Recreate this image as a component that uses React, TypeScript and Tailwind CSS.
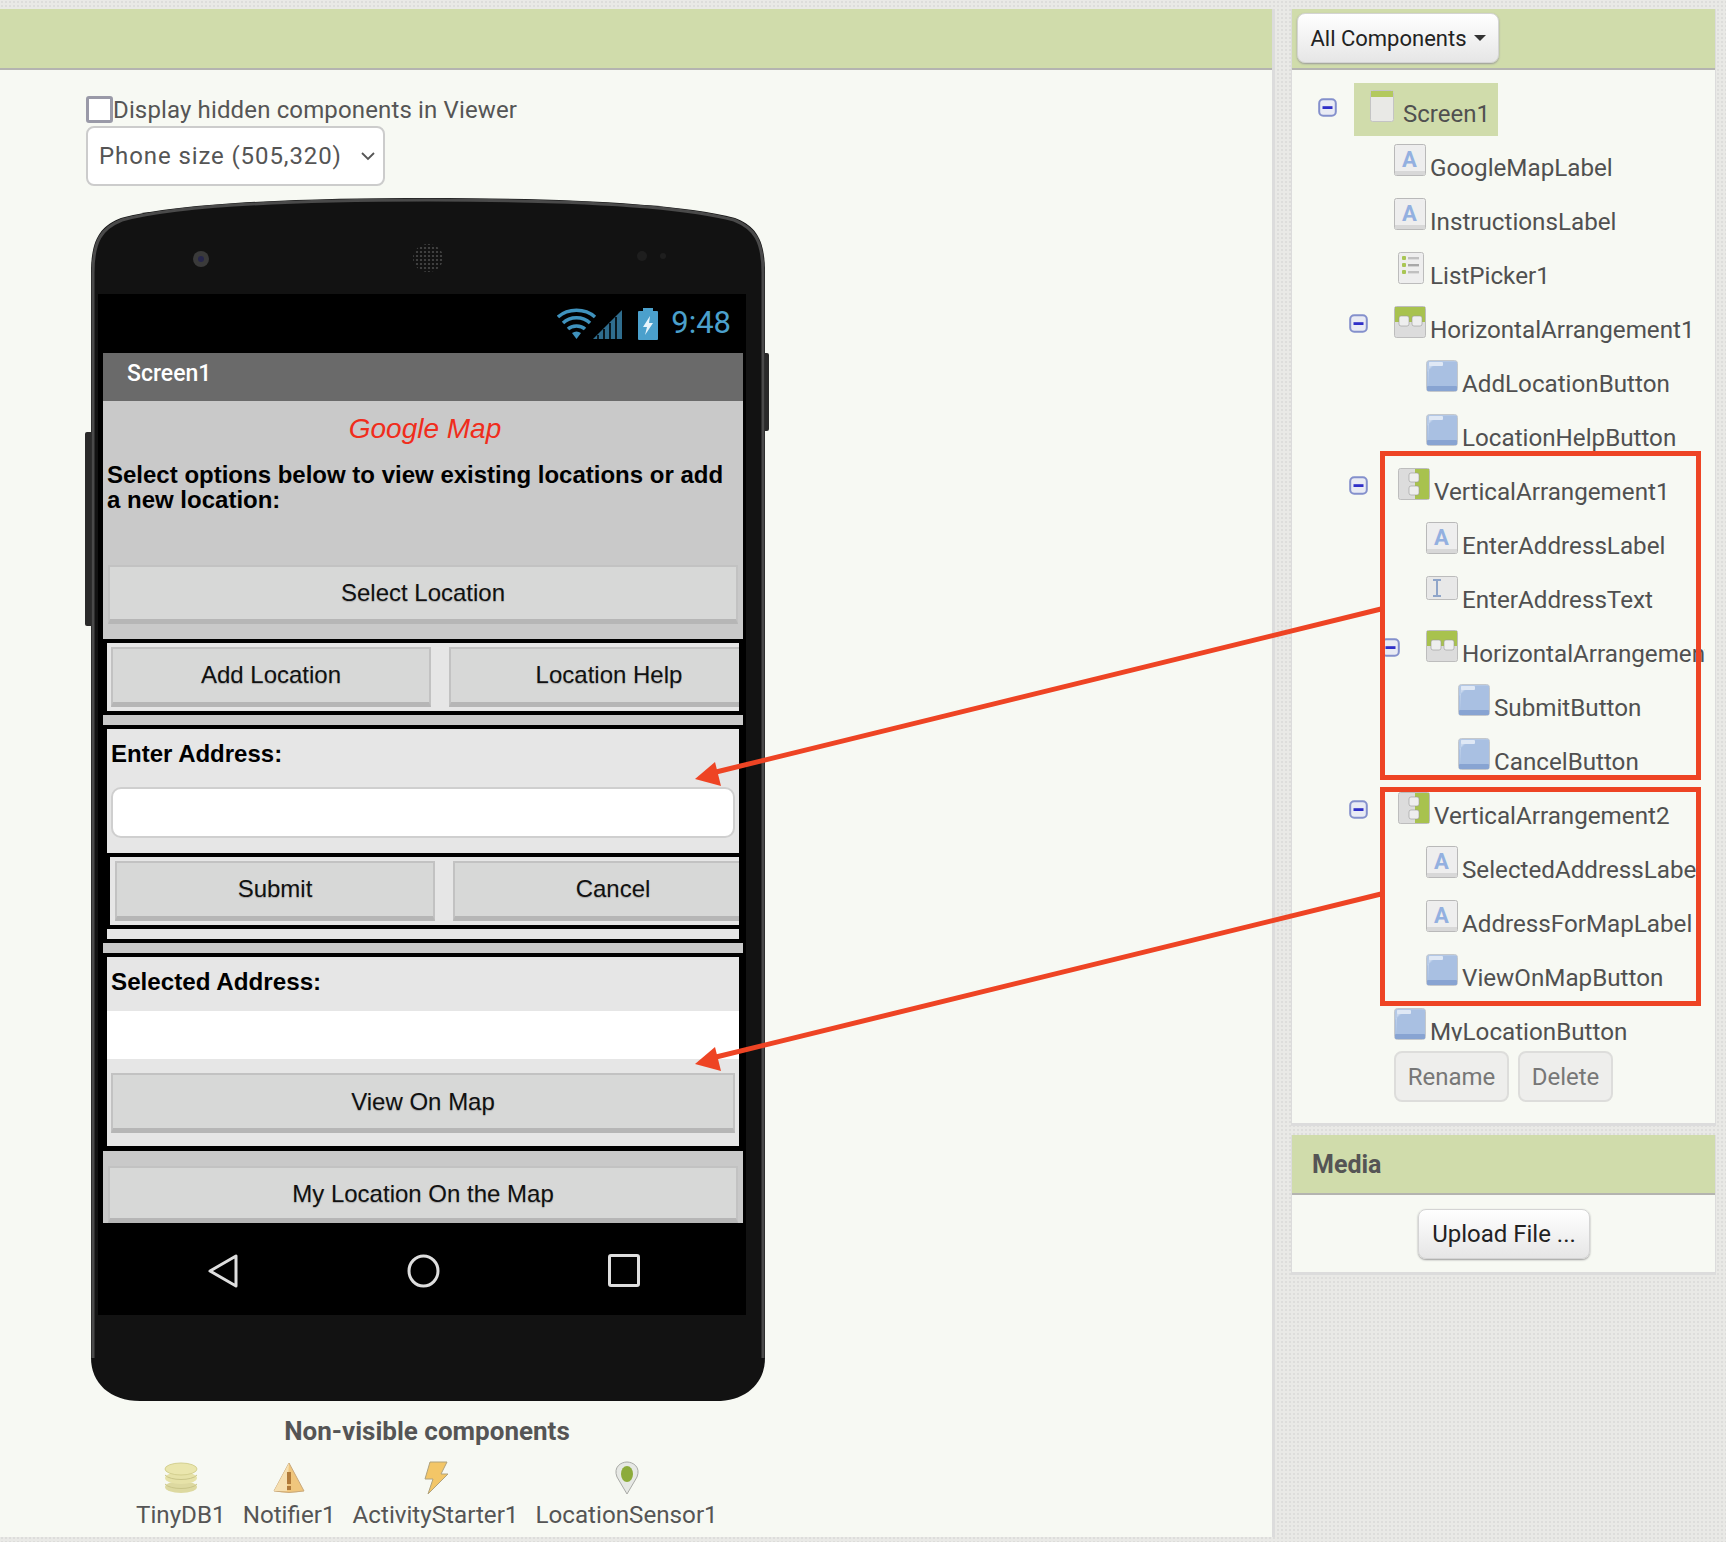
const ARIAL = "font-['Liberation_Sans',Arial,sans-serif]";

type Kind = "screen" | "label" | "list" | "hbox" | "vbox" | "text" | "button";

const tree: { name: string; kind: Kind; depth: number; toggle?: boolean }[] = [
  { name: "GoogleMapLabel", kind: "label", depth: 1 },
  { name: "InstructionsLabel", kind: "label", depth: 1 },
  { name: "ListPicker1", kind: "list", depth: 1 },
  { name: "HorizontalArrangement1", kind: "hbox", depth: 1, toggle: true },
  { name: "AddLocationButton", kind: "button", depth: 2 },
  { name: "LocationHelpButton", kind: "button", depth: 2 },
  { name: "VerticalArrangement1", kind: "vbox", depth: 1, toggle: true },
  { name: "EnterAddressLabel", kind: "label", depth: 2 },
  { name: "EnterAddressText", kind: "text", depth: 2 },
  { name: "HorizontalArrangement2", kind: "hbox", depth: 2, toggle: true },
  { name: "SubmitButton", kind: "button", depth: 3 },
  { name: "CancelButton", kind: "button", depth: 3 },
  { name: "VerticalArrangement2", kind: "vbox", depth: 1, toggle: true },
  { name: "SelectedAddressLabel", kind: "label", depth: 2 },
  { name: "AddressForMapLabel", kind: "label", depth: 2 },
  { name: "ViewOnMapButton", kind: "button", depth: 2 },
  { name: "MyLocationButton", kind: "button", depth: 1 },
];

function Minus() {
  return (
    <svg width="19" height="19" viewBox="0 0 19 19">
      <rect x="1.2" y="1.2" width="16.6" height="16.6" rx="4" fill="#e9ebf4" stroke="#8490cc" strokeWidth="2" />
      <rect x="4.5" y="8.2" width="10" height="2.8" fill="#3030c8" />
    </svg>
  );
}

function TreeIcon({ kind }: { kind: Kind }) {
  if (kind === "button") {
    return (
      <svg width="32" height="32" viewBox="0 0 32 32" className="shrink-0">
        <rect x="0.5" y="0.5" width="31" height="31" rx="3" fill="#b3c8e6" stroke="#c4c8cc" />
        <path d="M1 28 L1 12 L12 2 L31 2 L31 28 Z" fill="#a9c0e2" />
        <path d="M2 26 L2 10 L10 2 L3 2 Z" fill="#c9d8ee" />
        <rect x="3" y="2" width="14" height="4" rx="1" fill="#dfe8f5" />
        <rect x="1" y="26" width="30" height="5" rx="1" fill="#88a4d2" />
      </svg>
    );
  }
  if (kind === "label") {
    return (
      <svg width="32" height="32" viewBox="0 0 32 32" className="shrink-0">
        <rect x="0.5" y="0.5" width="31" height="31" rx="2" fill="#eeeeee" stroke="#b9b9b9" />
        <rect x="1" y="27" width="30" height="4" fill="#d8d8d8" />
        <text x="15.5" y="22.5" textAnchor="middle" fontFamily="Roboto" fontWeight="700" fontSize="22" fill="#93b0e0">
          A
        </text>
      </svg>
    );
  }
  if (kind === "text") {
    return (
      <svg width="32" height="24" viewBox="0 0 32 24" className="shrink-0">
        <rect x="0.5" y="0.5" width="31" height="23" rx="2" fill="#e8e8e8" stroke="#bcbcbc" />
        <path d="M7 4 H15 M7 20 H15 M11 4 V20" stroke="#8fa5c9" strokeWidth="2" fill="none" />
      </svg>
    );
  }
  if (kind === "list") {
    return (
      <svg width="26" height="32" viewBox="0 0 26 32" className="mr-[2px] ml-[4px] shrink-0">
        <rect x="0.5" y="0.5" width="25" height="31" rx="2" fill="#eeeeee" stroke="#bcbcbc" />
        <rect x="4" y="4" width="4" height="4" rx="1" fill="#a9c654" />
        <rect x="4" y="11" width="4" height="4" rx="1" fill="#a9c654" />
        <rect x="4" y="18" width="4" height="4" rx="1" fill="#a9c654" />
        <rect x="10" y="5" width="11" height="2.4" fill="#c0c0c0" />
        <rect x="10" y="12" width="11" height="2.4" fill="#a8a8a8" />
        <rect x="10" y="19" width="11" height="2.4" fill="#c0c0c0" />
      </svg>
    );
  }
  if (kind === "hbox") {
    return (
      <svg width="32" height="32" viewBox="0 0 32 32" className="shrink-0">
        <rect x="0.5" y="0.5" width="31" height="31" rx="2" fill="#dcdcdc" stroke="#bdbdbd" />
        <rect x="1" y="1" width="30" height="15" fill="#a8c24e" />
        <rect x="5" y="10" width="10" height="10" rx="2" fill="#eeeeee" stroke="#999" strokeWidth="0.6" />
        <rect x="18" y="10" width="10" height="10" rx="2" fill="#eeeeee" stroke="#999" strokeWidth="0.6" />
      </svg>
    );
  }
  if (kind === "vbox") {
    return (
      <svg width="32" height="32" viewBox="0 0 32 32" className="ml-[4px] shrink-0">
        <rect x="0.5" y="0.5" width="31" height="31" rx="2" fill="#dcdcdc" stroke="#bdbdbd" />
        <rect x="17" y="1" width="14" height="30" fill="#a8c24e" />
        <rect x="11" y="5" width="10" height="9" rx="2" fill="#eeeeee" stroke="#999" strokeWidth="0.6" />
        <rect x="11" y="18" width="10" height="9" rx="2" fill="#eeeeee" stroke="#999" strokeWidth="0.6" />
      </svg>
    );
  }
  return (
    <svg width="24" height="32" viewBox="0 0 24 32" className="shrink-0">
      <rect x="0.5" y="0.5" width="23" height="31" rx="2" fill="#e9e9e6" stroke="#c4c4c4" />
      <rect x="1" y="1" width="22" height="6" fill="#b3c95e" />
    </svg>
  );
}

function TreeRow({ name, kind, depth, toggle }: { name: string; kind: Kind; depth: number; toggle?: boolean }) {
  return (
    <div className="flex h-[54px] w-[413px] items-start overflow-hidden" style={{ paddingLeft: 25 + depth * 32 }}>
      <div className="mt-[12px] w-[45px] shrink-0">{toggle && <Minus />}</div>
      <div className="mt-[4px] shrink-0">
        <TreeIcon kind={kind} />
      </div>
      <span className="mt-[11px] ml-[4px] whitespace-nowrap text-[24.2px] leading-[34px] text-[#505050]">{name}</span>
    </div>
  );
}

function DroidButton({ label, className }: { label: string; className: string }) {
  return (
    <div
      className={`flex shrink-0 items-center justify-center border-2 border-b-[5px] border-[#c2c2c2] border-b-[#b6b6b6] bg-[#d7d8d7] text-[24px] text-[#111] [text-shadow:0_1px_1px_#aaa] ${className}`}
    >
      {label}
    </div>
  );
}

function StatusIcons() {
  return (
    <svg width="104" height="34" viewBox="0 0 104 34" className="mr-[10px]">
      <g fill="none" stroke="#3f92bd" strokeWidth="3.4">
        <path d="M1 10 C11 1 28 1 38 10" />
        <path d="M6 16 C13 9 26 9 33 16" />
        <path d="M11 22 C15 18 24 18 28 22" />
      </g>
      <path d="M15 26 C18 24 21 24 24 26 L19.5 32 Z" fill="#3f92bd" />
      <path d="M36 32 L65 3 L65 32 Z" fill="#3f92bd" opacity="0.75" />
      <path d="M41 32 L41 28 M47 32 L47 22 M53 32 L53 16 M59 32 L59 10" stroke="#000" strokeWidth="1.6" />
      <rect x="81" y="4" width="20" height="29" rx="1" fill="#4ba0cc" />
      <rect x="86" y="1" width="10" height="4" fill="#4ba0cc" />
      <path d="M93 9 L86 20 H90 L88 28 L96 16 H92 Z" fill="#e8f4fb" />
    </svg>
  );
}

function NonVisible({ label, children }: { label: string; children: React.ReactNode }) {
  return (
    <div className="flex flex-col items-center">
      <div className="flex h-[34px] items-center">{children}</div>
      <span className="mt-[3px] text-[24.2px] leading-[34px] text-[#555]">{label}</span>
    </div>
  );
}

function Phone() {
  return (
    <div className="relative mt-[12px] ml-[91px] h-[1203px] w-[674px]">
      <svg width="674" height="1203" viewBox="0 0 674 1203" className="absolute inset-0 overflow-visible">
        <defs>
          <pattern id="mesh" width="4" height="4" patternUnits="userSpaceOnUse">
            <circle cx="2" cy="2" r="1.1" fill="#4a4a4a" />
          </pattern>
        </defs>
        <rect x="-6" y="234" width="8" height="194" rx="2" fill="#2a2a2a" />
        <rect x="672" y="155" width="6" height="78" rx="2" fill="#2a2a2a" />
        <path
          d="M0 75 C0 40 10 28 30 20 C90 4 220 0 337 0 C454 0 584 4 644 20 C664 28 674 40 674 75 L674 1160 C674 1185 655 1203 625 1203 L49 1203 C19 1203 0 1185 0 1160 Z"
          fill="#121212"
        />
        <path
          d="M2 1160 L2 75 C2 42 11 30 31 22 C90 6 220 2 337 2 C454 2 584 6 643 22 C663 30 672 42 672 75 L672 1160"
          fill="none"
          stroke="#4a4a4a"
          strokeWidth="3"
        />
        <circle cx="110" cy="61" r="8" fill="#3a3a3a" />
        <circle cx="110" cy="61" r="3" fill="#26264a" />
        <ellipse cx="337" cy="60" rx="15" ry="14" fill="url(#mesh)" />
        <circle cx="551" cy="58" r="5" fill="#1e1e1e" />
        <circle cx="572" cy="58" r="3" fill="#1e1e1e" />
      </svg>
      <div className={`absolute top-[96px] left-[7px] flex h-[1021px] w-[648px] flex-col bg-black pr-[3px] pl-[5px] ${ARIAL}`}>
        <div className="flex h-[59px] items-center justify-end">
          <StatusIcons />
          <span className="mr-[12px] font-[Roboto] text-[31px] text-[#4ba0cc]">9:48</span>
        </div>
        <div className="flex h-[48px] items-center bg-[#6a6a6a] pb-[5px] pl-[24px] font-[Roboto] text-[23px] font-medium text-white">
          Screen1
        </div>
        <div className="flex h-[238px] flex-col bg-[#c9c9c9]">
          <div className="mt-[10px] pl-[4px] text-center text-[28px] leading-[36px] text-[#f02d1c] italic">Google Map</div>
          <div className="mt-[15px] pl-[4px] text-[24px] leading-[25px] font-bold text-black">
            Select options below to view existing locations or add a new location:
          </div>
          <DroidButton label="Select Location" className="mx-[5px] mt-[53px] h-[59px]" />
        </div>
        <div className="mx-[4px] mt-[4px] flex h-[68px] gap-[18px] overflow-hidden bg-[#e6e6e6] p-[4px]">
          <DroidButton label="Add Location" className="h-[60px] w-[320px] pb-[2px]" />
          <DroidButton label="Location Help" className="h-[60px] w-[320px] pb-[2px]" />
        </div>
        <div className="mt-[4px] h-[10px] bg-[#c9c9c9]" />
        <div className="mx-[4px] mt-[4px] h-[124px] bg-[#e6e6e6] pt-[8px] pl-[4px]">
          <div className="text-[24px] leading-[34px] font-bold text-black">Enter Address:</div>
          <div className="mt-[16px] h-[51px] w-[624px] rounded-[10px] border-2 border-[#cfcfcf] bg-white" />
        </div>
        <div className="mt-[4px] mr-[4px] ml-[7px] flex h-[68px] gap-[18px] overflow-hidden bg-[#e6e6e6] p-[4px] pl-[5px]">
          <DroidButton label="Submit" className="h-[60px] w-[320px] pb-[2px]" />
          <DroidButton label="Cancel" className="h-[60px] w-[320px] pb-[2px]" />
        </div>
        <div className="mx-[4px] mt-[4px] h-[10px] bg-[#e6e6e6]" />
        <div className="mt-[4px] h-[10px] bg-[#c9c9c9]" />
        <div className="mx-[4px] mt-[4px] flex h-[189px] flex-col bg-[#e6e6e6]">
          <div className="h-[54px] pt-[8px] pl-[4px] text-[24.2px] leading-[34px] font-bold text-black">
            Selected Address:
          </div>
          <div className="h-[48px] bg-white" />
          <DroidButton label="View On Map" className="mx-[4px] mt-[14px] h-[60px]" />
        </div>
        <div className="mt-[5px] flex h-[72px] flex-col bg-[#c9c9c9]">
          <DroidButton label="My Location On the Map" className="mx-[5px] mt-[15px] h-[57px] border-b-[3px] pt-[2px]" />
        </div>
        <div className="flex flex-1 items-center justify-between pt-[3px] pr-[103px] pl-[104px]">
          <svg width="32" height="36" viewBox="0 0 32 36">
            <path d="M29 3 L29 33 L3 18 Z" fill="none" stroke="#dedede" strokeWidth="3" strokeLinejoin="round" />
          </svg>
          <svg width="33" height="34" viewBox="0 0 33 34">
            <ellipse cx="16.5" cy="17" rx="14.5" ry="15" fill="none" stroke="#dedede" strokeWidth="3" />
          </svg>
          <svg width="32" height="33" viewBox="0 0 32 33">
            <rect x="1.5" y="1.5" width="29" height="30" rx="1.5" fill="none" stroke="#dedede" strokeWidth="3" />
          </svg>
        </div>
      </div>
    </div>
  );
}

export default function App() {
  return (
    <div className="relative flex h-[1542px] w-[1726px] overflow-hidden bg-[#e9e9e6] bg-[radial-gradient(#dddddb_1px,transparent_1px)] bg-[length:4px_4px] pt-[9px] font-[Roboto,sans-serif]">
      <div className="flex h-[1528px] w-[1275px] flex-col border-r-[3px] border-[#dcdcdc] bg-[#f7f9f3]">
        <div className="h-[61px] shrink-0 border-b-2 border-[#b4b4b0] bg-[#d0dcab]" />
        <div className="mt-[24px] ml-[86px] flex h-[31px] items-center">
          <div className="h-[27px] w-[27px] rounded-[3px] border-[3px] border-[#9a9aa8] bg-white" />
          <span className="text-[24px] leading-[30px] tracking-[0.14px] text-[#555]">
            Display hidden components in Viewer
          </span>
        </div>
        <div className="mt-[1px] ml-[86px] flex h-[60px] w-[299px] items-center justify-between rounded-[8px] border-2 border-[#cccccc] bg-white pr-[7px] pl-[11px] text-[24px] tracking-[0.9px] text-[#555]">
          <span>Phone size (505,320)</span>
          <svg width="16" height="10" viewBox="0 0 16 10">
            <path d="M2 2 L8 8 L14 2" fill="none" stroke="#555" strokeWidth="1.8" />
          </svg>
        </div>
        <Phone />
        <div className="mt-[14px] ml-[86px] w-[682px] text-center text-[26px] leading-[32px] font-bold text-[#555]">
          Non-visible components
        </div>
        <div className="mt-[14px] ml-[136px] flex gap-[17px]">
          <NonVisible label="TinyDB1">
            <svg width="34" height="32" viewBox="0 0 34 32">
              <ellipse cx="17" cy="25" rx="16" ry="6" fill="#ddd9a0" />
              <ellipse cx="17" cy="16" rx="16" ry="6" fill="#e6e2a8" />
              <ellipse cx="17" cy="7" rx="16" ry="6" fill="#eae6ad" stroke="#d4d090" />
              <path d="M1 13 C6 19 28 19 33 13 M1 22 C6 28 28 28 33 22" stroke="#c9c588" fill="none" />
            </svg>
          </NonVisible>
          <NonVisible label="Notifier1">
            <svg width="32" height="32" viewBox="0 0 32 32">
              <path d="M16 1 L31 29 Q16 32 1 29 Z" fill="#f0c67d" stroke="#c9a97c" />
              <path d="M16 1 L1 29 L14 29 Z" fill="#f6dfb0" />
              <rect x="14" y="10" width="4" height="12" fill="#b07a3a" />
              <rect x="14" y="24" width="4" height="4" fill="#b07a3a" />
            </svg>
          </NonVisible>
          <NonVisible label="ActivityStarter1">
            <svg width="26" height="34" viewBox="0 0 26 34">
              <path d="M7 1 L24 1 L18 13 L25 13 L5 33 L10 18 L2 18 Z" fill="#f3c667" stroke="#b0a27c" />
            </svg>
          </NonVisible>
          <NonVisible label="LocationSensor1">
            <svg width="24" height="34" viewBox="0 0 24 34">
              <path d="M12 33 L2 16 C-2 6 6 1 12 1 C18 1 26 6 22 16 Z" fill="#e6e8e4" stroke="#a9aaa6" />
              <ellipse cx="12" cy="13" rx="6" ry="8" fill="#8cab3a" />
            </svg>
          </NonVisible>
        </div>
      </div>

      <div className="ml-[16px] flex w-[425px] flex-col">
        <div className="flex h-[1117px] flex-col border-r-[1px] border-b-[3px] border-l-[1px] border-[#dcdcdc] bg-[#f7f9f3]">
          <div className="flex h-[61px] shrink-0 items-start border-b-2 border-[#b4b4b0] bg-[#d0dcab] pt-[4px] pl-[5px]">
            <div className="flex h-[50px] w-[202px] items-center justify-center gap-[7px] rounded-[8px] border border-[#d4d4d4] bg-gradient-to-b from-white to-[#e6e6e6] text-[22px] text-[#222] shadow-[0_1px_2px_#999]">
              All Components
              <svg width="12" height="6" viewBox="0 0 12 6">
                <path d="M0 0 H12 L6 6 Z" fill="#333" />
              </svg>
            </div>
          </div>
          <div className="h-[971px] shrink-0 overflow-hidden pt-[13px]">
            <div className="flex h-[57px] items-start pl-[26px]">
              <div className="mt-[15px] w-[36px]">
                <Minus />
              </div>
              <div className="flex h-[53px] w-[144px] items-start bg-[#d0dcab] pt-[7px] pl-[16px]">
                <TreeIcon kind="screen" />
                <span className="mt-[7px] ml-[9px] text-[24px] leading-[34px] text-[#505050]">Screen1</span>
              </div>
            </div>
            {tree.map((row) => (
              <TreeRow key={row.name} {...row} />
            ))}
          </div>
          <div className="ml-[102px] flex gap-[9px] pt-[10px]">
            <div className="flex h-[51px] w-[115px] items-center justify-center rounded-[8px] border-2 border-[#dddddb] bg-[#eeeeec] text-[24px] text-[#777]">
              Rename
            </div>
            <div className="flex h-[51px] w-[95px] items-center justify-center rounded-[8px] border-2 border-[#dddddb] bg-[#eeeeec] text-[24px] text-[#777]">
              Delete
            </div>
          </div>
        </div>
        <div className="mt-[9px] flex h-[140px] flex-col border-r-[1px] border-b-[3px] border-l-[1px] border-[#dcdcdc] bg-[#f7f9f3]">
          <div className="flex h-[60px] shrink-0 items-center border-b-2 border-[#b4b4b0] bg-[#d0dcab] pt-[2px] pl-[20px] text-[25px] font-bold text-[#555]">
            Media
          </div>
          <div className="mt-[14px] ml-[126px] flex h-[50px] w-[172px] items-center justify-center rounded-[8px] border border-[#d4d4d4] bg-gradient-to-b from-white to-[#e6e6e6] text-[24px] text-[#222] shadow-[0_1px_2px_#999]">
            Upload File ...
          </div>
        </div>
      </div>

      <div className="absolute top-[451px] left-[1380px] h-[329px] w-[321px] border-[5px] border-[#ee4424]" />
      <div className="absolute top-[787px] left-[1380px] h-[219px] w-[321px] border-[5px] border-[#ee4424]" />
      <svg width="1726" height="1542" viewBox="0 0 1726 1542" className="pointer-events-none absolute inset-0">
        <path d="M1381 609 L712 773" stroke="#ee4424" strokeWidth="5" fill="none" />
        <path d="M695 779 L715 762 L721 786 Z" fill="#ee4424" />
        <path d="M1381 894 L712 1058" stroke="#ee4424" strokeWidth="5" fill="none" />
        <path d="M695 1064 L715 1047 L721 1071 Z" fill="#ee4424" />
      </svg>
    </div>
  );
}
